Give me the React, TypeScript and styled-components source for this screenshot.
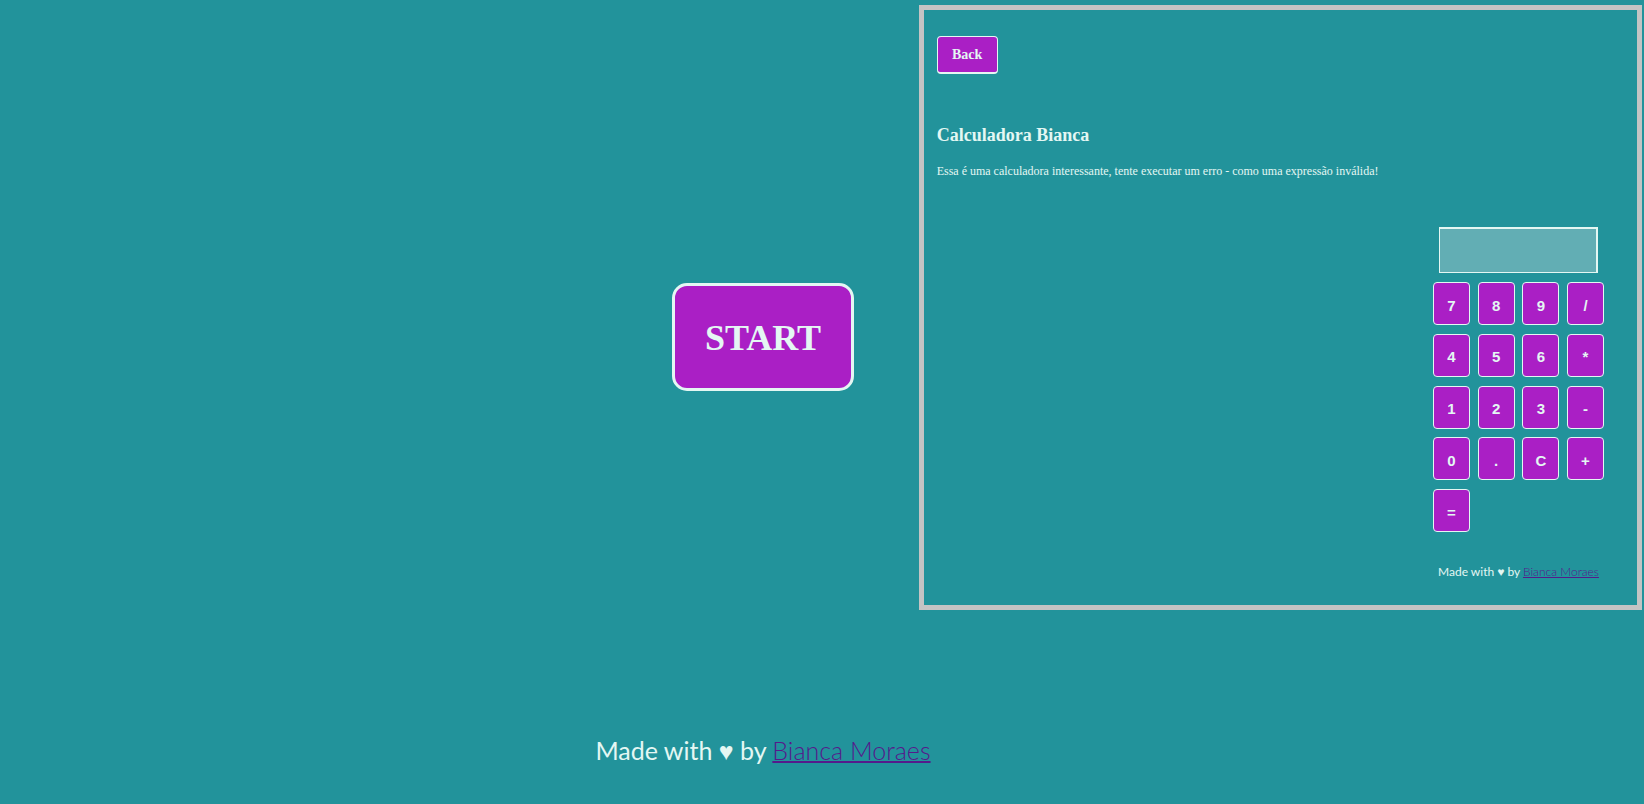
import React, { useState } from "react";
import styled, { createGlobalStyle } from "styled-components";

const GlobalStyle = createGlobalStyle`
  * { box-sizing: border-box; }
  body {
    margin: 0;
    background: #22939b;
    color: #e4f7f3;
    font-family: "Liberation Serif", "Times New Roman", serif;
  }
`;

const Page = styled.div`
  position: relative;
  min-height: 100vh;
`;

const Hero = styled.main`
  display: flex;
  flex-direction: column;
  align-items: center;
  width: calc(100% - 118px);
  padding: 283px 0 36px;
`;

const PurpleButton = styled.button`
  border: 1px solid #e4f7f3;
  border-radius: 4px;
  background: #aa1fc5;
  color: #e4f7f3;
  font-weight: bold;
  padding: 0;
  cursor: pointer;
`;

const StartButton = styled(PurpleButton)`
  height: 108px;
  padding: 2px 30px 0;
  border-width: 3px;
  border-radius: 15px;
  font-family: "Liberation Serif", serif;
  font-size: 36px;
`;

const Credit = styled.p<{ $small?: boolean }>`
  margin: 0;
  font-family: Lato, "Open Sans", sans-serif;
  font-size: ${(p) => (p.$small ? 12 : 25)}px;
  line-height: 1;
  white-space: nowrap;

  a {
    text-decoration-thickness: ${(p) => (p.$small ? 1 : 2)}px;
  }
`;

const HeroCredit = styled(Credit)`
  margin-top: 347px;
`;

const AuthorLink = styled.a`
  color: #551a8b;
  font-weight: 300;
  text-decoration: underline;
`;

const Preview = styled.section`
  position: absolute;
  top: 5px;
  right: 2px;
  width: 44%;
  height: 605px;
  padding: 26px 33px 0 13px;
  border: 5px solid #c4c4c4;
`;

const BackButton = styled(PurpleButton)`
  display: block;
  width: 61px;
  height: 38px;
  border-bottom-width: 2px;
  font-family: "Liberation Serif", serif;
  font-size: 14px;
`;

const Title = styled.h2`
  margin: 49px 0 0;
  font-size: 18px;
  line-height: 24px;
`;

const Intro = styled.p`
  margin: 16px 0 0;
  font-size: 12px;
  line-height: 16px;
`;

const Calculator = styled.div`
  display: flex;
  flex-direction: column;
  align-items: center;
  width: 171px;
  margin: 48px 0 0 auto;
`;

const Display = styled.input`
  width: 159px;
  height: 46px;
  padding: 0 8px;
  border: solid #e4f7f3;
  border-width: 2px 2px 1px 1px;
  border-radius: 0;
  background: #62aeb4;
  color: #e4f7f3;
  font: bold 16px "Liberation Sans", sans-serif;
  text-align: right;
`;

const Keys = styled.div`
  display: grid;
  grid-template-columns: repeat(4, 37px);
  grid-auto-rows: 43px;
  justify-content: space-between;
  align-content: space-between;
  width: 100%;
  height: 250px;
  margin: 9px 0 34px;
`;

const Key = styled(PurpleButton)`
  padding-top: 3px;
  font-family: "Liberation Sans", Arial, sans-serif;
  font-size: 15px;
`;

const KEYS = ["7", "8", "9", "/", "4", "5", "6", "*", "1", "2", "3", "-", "0", ".", "C", "+", "="];

function MadeBy() {
  return (
    <>
      Made with ♥ by <AuthorLink href="#bianca">Bianca Moraes</AuthorLink>
    </>
  );
}

export default function App() {
  const [value, setValue] = useState("");
  const press = (key: string) => {
    if (key === "C") setValue("");
    else if (key !== "=") setValue((v) => v + key);
  };

  return (
    <Page>
      <GlobalStyle />
      <Hero>
        <StartButton type="button">START</StartButton>
        <HeroCredit>
          <MadeBy />
        </HeroCredit>
      </Hero>
      <Preview>
        <BackButton type="button">Back</BackButton>
        <Title>Calculadora Bianca</Title>
        <Intro>Essa é uma calculadora interessante, tente executar um erro - como uma expressão inválida!</Intro>
        <Calculator>
          <Display aria-label="Resultado" readOnly value={value} />
          <Keys>
            {KEYS.map((key) => (
              <Key key={key} type="button" onClick={() => press(key)}>
                {key}
              </Key>
            ))}
          </Keys>
          <Credit $small>
            <MadeBy />
          </Credit>
        </Calculator>
      </Preview>
    </Page>
  );
}
